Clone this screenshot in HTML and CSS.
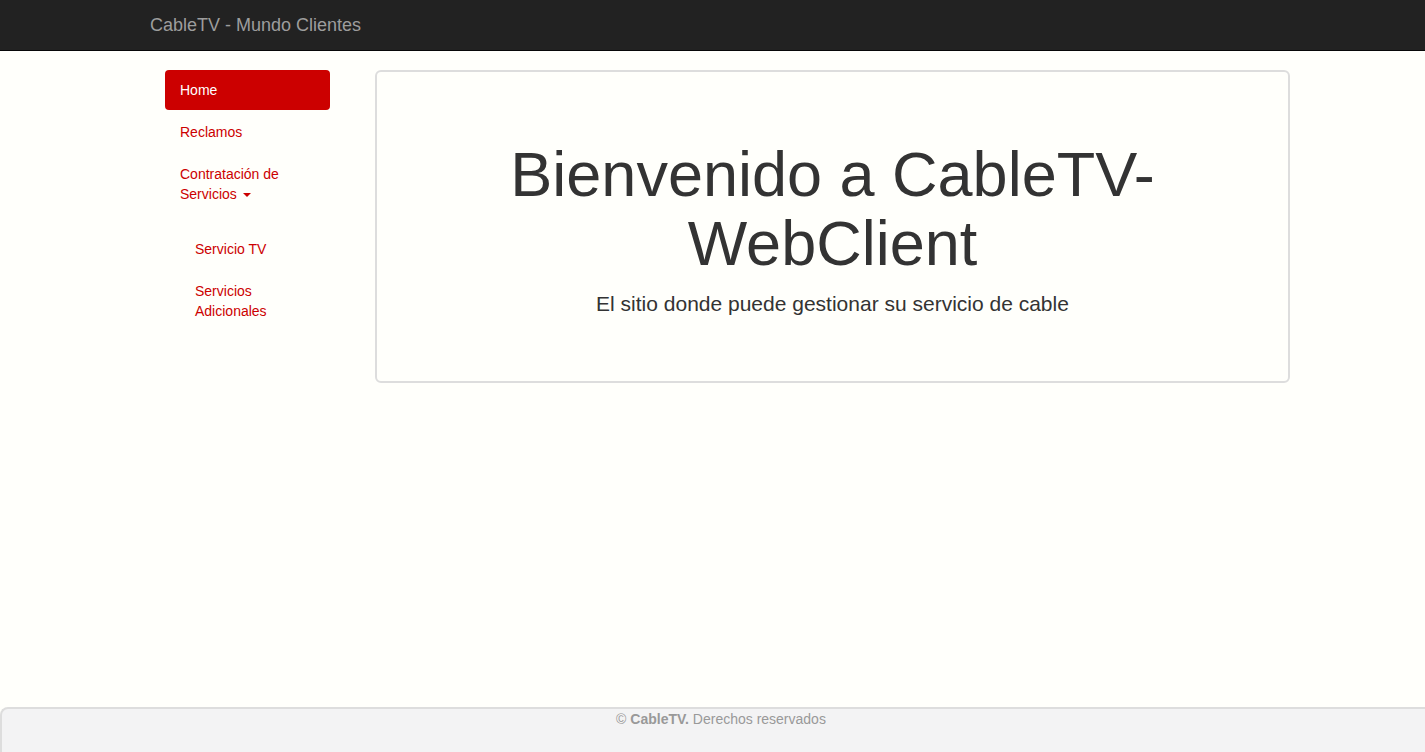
FILE: index.html
```html
<!DOCTYPE html>
<html lang="es">
<head>
<meta charset="utf-8">
<title>CableTV - Mundo Clientes</title>
<link rel="stylesheet" href="styles.css">
</head>
<body>
<header class="navbar">
  <div class="navbar-inner">
    <a class="brand" href="#">CableTV - Mundo Clientes</a>
  </div>
</header>
<div class="page">
  <div class="layout">
    <nav class="sidebar">
      <ul class="pills">
        <li><a class="pill active" href="#">Home</a></li>
        <li><a class="pill" href="#">Reclamos</a></li>
        <li><a class="pill" href="#">Contratación de Servicios <span class="caret"></span></a>
          <ul class="sub">
            <li><a class="pill" href="#">Servicio TV</a></li>
            <li><a class="pill" href="#">Servicios Adicionales</a></li>
          </ul>
        </li>
      </ul>
    </nav>
    <main class="main">
      <section class="jumbotron">
        <h1>Bienvenido a CableTV-WebClient</h1>
        <p>El sitio donde puede gestionar su servicio de cable</p>
      </section>
    </main>
  </div>
</div>
<footer class="footer">
  <span>© <b>CableTV.</b> Derechos reservados</span>
</footer>
</body>
</html>
```
FILE: styles.css
```css
html, body {
  margin: 0;
  padding: 0;
}
body {
  background: #fffffb;
  font-family: "Liberation Sans", Arial, Helvetica, sans-serif;
  font-size: 14px;
  line-height: 20px;
  color: #333;
  min-height: 752px;
  display: flex;
  flex-direction: column;
  overflow-x: hidden;
}
a { text-decoration: none; }

.navbar {
  background: #222;
  border-bottom: 1px solid #080808;
  height: 50px;
}
.navbar-inner {
  padding-left: 150px;
}
.brand {
  display: inline-block;
  color: #9d9d9d;
  font-size: 18px;
  line-height: 20px;
  padding: 15px 0;
}

.page {
  flex: 1;
}
.layout {
  display: flex;
  margin-left: 165px;
  padding-top: 19px;
  gap: 45px;
}
.sidebar {
  width: 165px;
  flex: none;
}
.pills, .sub {
  list-style: none;
  margin: 0;
  padding: 0;
}
.pills > li + li { margin-top: 2px; }
.pill {
  display: block;
  padding: 10px 15px;
  color: #cc0000;
  border-radius: 4px;
}
.pill.active {
  background: #cc0000;
  color: #fff;
}
.caret {
  display: inline-block;
  width: 0;
  height: 0;
  margin-left: 2px;
  vertical-align: middle;
  border-top: 4px solid #cc0000;
  border-left: 4px solid transparent;
  border-right: 4px solid transparent;
}
.sub {
  padding-left: 15px;
  margin-top: 15px;
}
.sub > li + li { margin-top: 2px; }
.sub .pill { padding-right: 30px; }

.main {
  width: 915px;
  flex: none;
}
.jumbotron {
  border: 2px solid #ddd;
  border-radius: 6px;
  padding: 48px 60px;
  text-align: center;
}
.jumbotron h1 {
  margin: 20px 0 10px;
  font-size: 63px;
  line-height: 1.1;
  font-weight: 500;
  color: #333;
}
.jumbotron p {
  margin: 0 0 15px;
  font-size: 21px;
  line-height: 1.4;
}

.footer {
  background: #f3f3f4;
  border: 2px solid #ddd;
  border-right: none;
  border-bottom: none;
  border-top-left-radius: 8px;
  height: 43px;
  margin-right: -15px;
  text-align: center;
  font-size: 14px;
  line-height: 20px;
  color: #999;
}
.footer b { font-weight: bold; }
```
